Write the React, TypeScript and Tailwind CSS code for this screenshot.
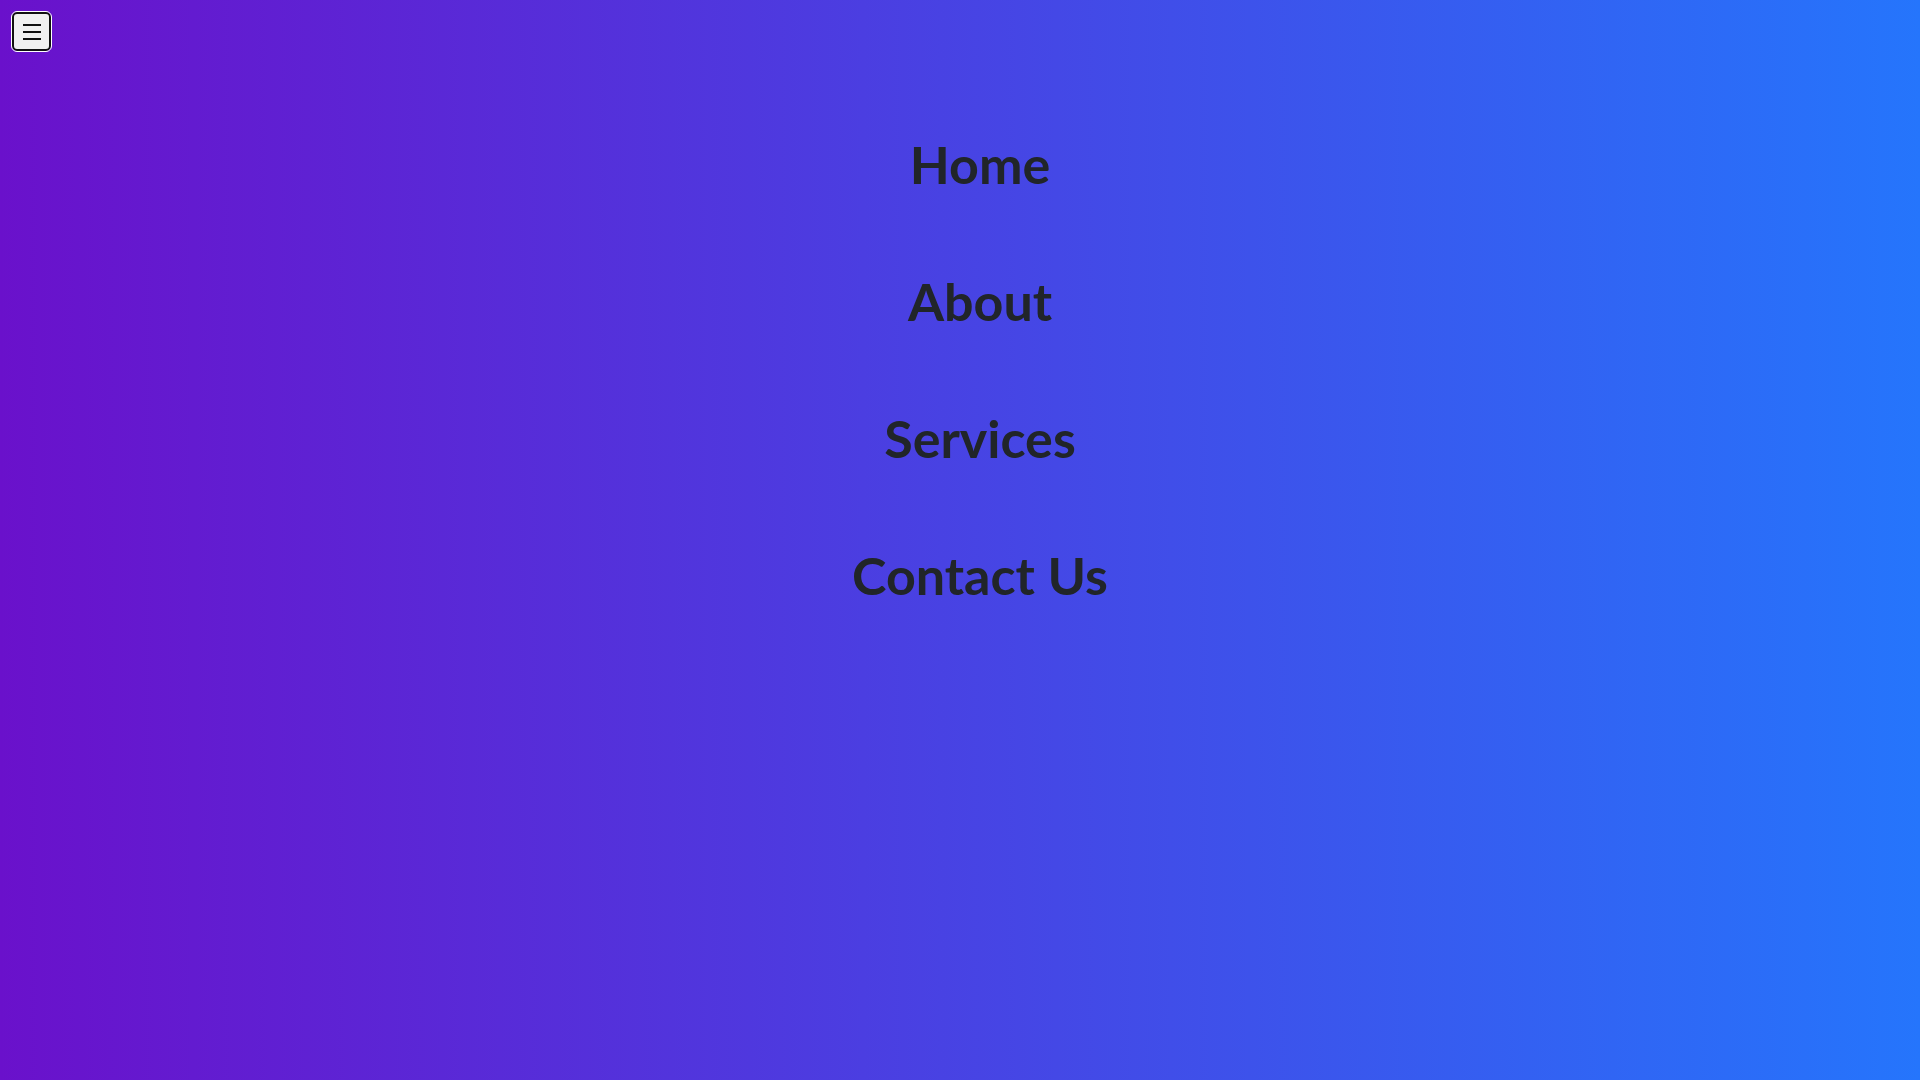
const links = ['Home', 'About', 'Services', 'Contact Us']

export default function App() {
  return (
    <div className="min-h-screen w-full bg-linear-to-r/srgb from-[#6a11cb] to-[#2575fc] font-['Lato','Open_Sans',sans-serif]">
      <div className="p-3">
        <button
          aria-label="Menu"
          className="flex h-[39px] w-[39px] flex-col items-center justify-center gap-[5px] rounded-[5px] border-2 border-[#111] bg-[#f0f0f0] outline outline-1 outline-white"
        >
          <span className="block h-[2px] w-[18px] bg-[#111]" />
          <span className="block h-[2px] w-[18px] bg-[#111]" />
          <span className="block h-[2px] w-[18px] bg-[#111]" />
        </button>
      </div>

      <nav>
        <ul className="flex flex-col gap-[59px] pl-10 pt-[62px] text-center">
          {links.map((l) => (
            <li key={l}>
              <a href="#" className="text-[52px] font-bold leading-[78px] text-[#212529]">
                {l}
              </a>
            </li>
          ))}
        </ul>
      </nav>
    </div>
  )
}
